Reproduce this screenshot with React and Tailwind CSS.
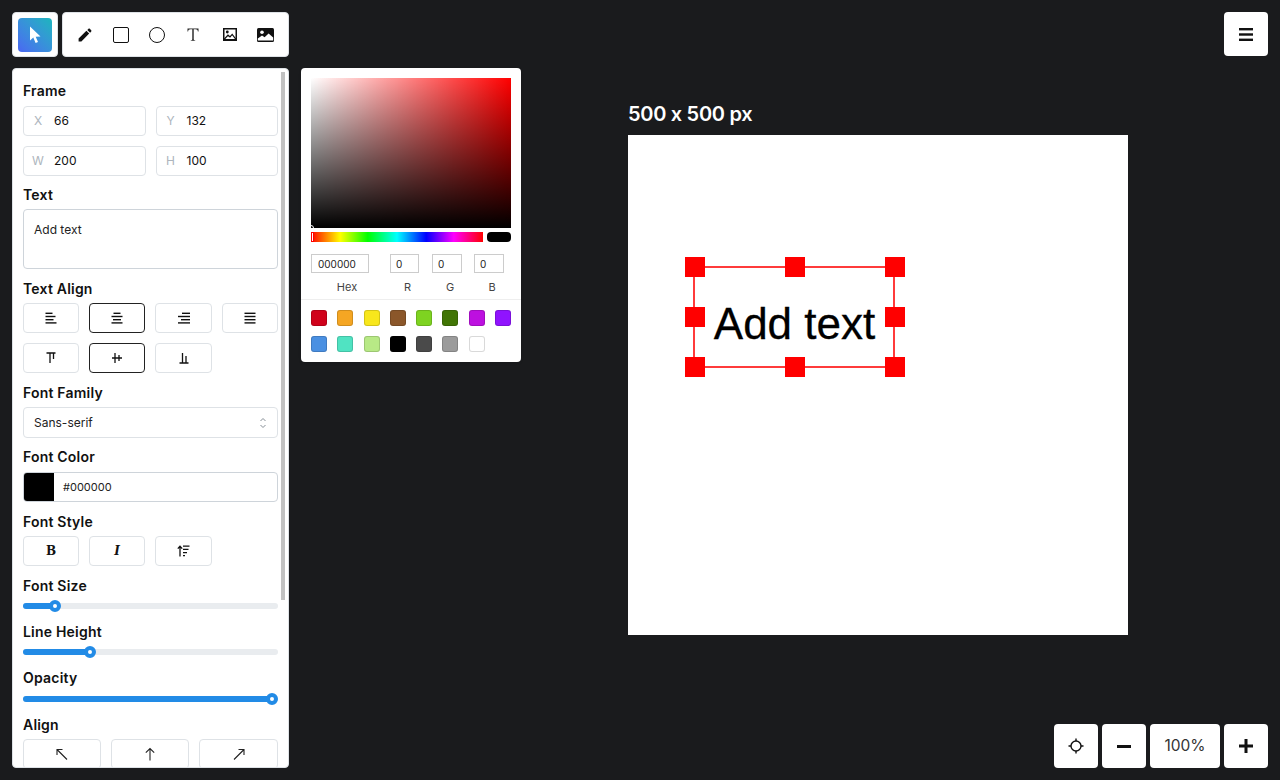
import { useMemo } from 'react';

const swatches = ['#D0021B', '#F5A623', '#F8E71C', '#8B572A', '#7ED321', '#417505', '#BD10E0', '#9013FE', '#4A90E2', '#50E3C2', '#B8E986', '#000000', '#4A4A4A', '#9B9B9B', '#FFFFFF'];

function Bars({ rows }) {
  return (
    <svg width="12" height="12" viewBox="0 0 12 12" fill="#111">
      {rows.map(([x, w], i) => <rect key={i} x={x} y={i * 3.2 + 0.6} width={w} height="1.4" />)}
    </svg>
  );
}

function VAlign({ d }) {
  return (
    <svg width="12" height="12" viewBox="0 0 12 12" stroke="#111" strokeWidth="1.3" fill="none">
      <path d={d} />
    </svg>
  );
}

function Arrow({ d }) {
  return (
    <svg width="14" height="14" viewBox="0 0 14 14" fill="none" stroke="#222" strokeWidth="1.1">
      <path d={d} />
    </svg>
  );
}

function Label({ children, className }) {
  return <div className={`text-sm leading-5 font-semibold tracking-[0.2px] text-[#111] ${className}`}>{children}</div>;
}

function NumField({ tag, value }) {
  return (
    <div className="flex h-[30px] flex-1 items-center rounded border border-[#dee2e6] text-xs text-[#111]">
      <span className="w-[30px] pr-[2px] text-center text-[#adb5bd]">{tag}</span>
      <span>{value}</span>
    </div>
  );
}

function IconBtn({ active, className, children }) {
  return (
    <div className={`flex h-[30px] items-center justify-center rounded border bg-white ${active ? 'border-[#222]' : 'border-[#dee2e6]'} ${className}`}>
      {children}
    </div>
  );
}

function Slider({ pos, className }) {
  return (
    <div className={`relative h-[6px] rounded-full bg-[#e9ecef] ${className}`}>
      <div className="h-full rounded-full bg-[#228be6]" style={{ width: pos }} />
      <div className="absolute top-[-3px] h-3 w-3 rounded-full border-4 border-[#228be6] bg-white" style={{ left: pos - 6 }} />
    </div>
  );
}

function Tools() {
  return (
    <div className="flex gap-1">
      <div className="flex h-[45px] w-[46px] items-center justify-center rounded border border-[#dee2e6] bg-white">
        <div className="flex h-[34px] w-[34px] items-center justify-center rounded bg-gradient-to-tr from-[#4a66f2] to-[#1cb5bd]">
          <svg width="14" height="18" viewBox="0 0 14 18" fill="#fff">
            <path d="M2 0.5V14.5L5.3 11.6L7.6 17L10 16L7.7 10.7L12.5 10.4Z" />
          </svg>
        </div>
      </div>
      <div className="flex h-[45px] w-[227px] items-center rounded border border-[#dee2e6] bg-white px-[4px]">
        <div className="flex w-9 justify-center">
          <svg width="14" height="14" viewBox="0 0 14 14" fill="#111">
            <path d="M0.6 13.4V10.6L8.4 2.8L11.2 5.6L3.4 13.4ZM9.3 1.9L10.5 0.8C10.9 0.4 11.4 0.4 11.8 0.8L13.2 2.2C13.6 2.6 13.6 3.1 13.2 3.5L12.1 4.7Z" />
          </svg>
        </div>
        <div className="flex w-9 justify-center">
          <div className="h-4 w-4 rounded-[2px] border border-[#111]" />
        </div>
        <div className="flex w-9 justify-center">
          <div className="h-4 w-4 rounded-full border border-[#111]" />
        </div>
        <div className="flex w-9 justify-center">
          <svg width="12" height="13" viewBox="0 0 12 13" fill="#222">
            <path d="M0.5 0.5H11.5V3.6H10.9C10.7 2 10.2 1.2 8.4 1.2H6.7V11C6.7 11.9 7 12.2 8.2 12.3V12.8H3.8V12.3C5 12.2 5.3 11.9 5.3 11V1.2H3.6C1.8 1.2 1.3 2 1.1 3.6H0.5Z" />
          </svg>
        </div>
        <div className="flex w-9 justify-center pl-px">
          <svg width="14" height="13" viewBox="0 0 14 13">
            <rect x="0.75" y="0.75" width="12.5" height="11.5" fill="none" stroke="#111" strokeWidth="1.5" />
            <circle cx="4.3" cy="4" r="1.4" fill="#111" />
            <path d="M1 11.5L5 7.2L7 9L9.2 6.4L13 11.5Z" fill="none" stroke="#111" strokeWidth="1.2" />
          </svg>
        </div>
        <div className="flex w-9 justify-center pl-px">
          <svg width="17" height="14" viewBox="0 0 17 14">
            <rect width="17" height="14" rx="1.5" fill="#111" />
            <circle cx="5" cy="4.2" r="1.8" fill="#fff" />
            <path d="M0.8 12.6V10.6L5 7.6L7.6 9.2L11.6 5.6L16.2 9.6V12.6Z" fill="#fff" />
          </svg>
        </div>
      </div>
    </div>
  );
}

function Panel() {
  return (
    <div className="relative mt-[11px] h-[700px] w-[277px] overflow-hidden rounded border border-[#dee2e6] bg-white px-[10px] pt-[12px]">
      <div className="absolute top-[3px] left-[268px] h-[528px] w-[4px] bg-[#c1c1c1]" />
      <Label className="mb-[5px]">Frame</Label>
      <div className="flex flex-col gap-[10px]">
        <div className="flex gap-[10px]"><NumField tag="X" value="66" /><NumField tag="Y" value="132" /></div>
        <div className="flex gap-[10px]"><NumField tag="W" value="200" /><NumField tag="H" value="100" /></div>
      </div>
      <Label className="mt-[9px] mb-[4px]">Text</Label>
      <div className="h-[60px] rounded border border-[#ced4da] px-[10px] py-[12px] text-xs leading-[15px] text-[#222]">Add text</div>
      <Label className="mt-[10px] mb-[4px]">Text Align</Label>
      <div className="grid grid-cols-[56px_56px_57px_56px] gap-[10px]">
        <IconBtn><Bars rows={[[0.5, 7], [0.5, 10], [0.5, 8], [0.5, 11]]} /></IconBtn>
        <IconBtn active><Bars rows={[[2.5, 7], [0.5, 11], [2, 8], [0.5, 11]]} /></IconBtn>
        <IconBtn><Bars rows={[[4, 8], [0, 12], [3, 9], [0, 12]]} /></IconBtn>
        <IconBtn><Bars rows={[[0.5, 11], [0.5, 11], [0.5, 11], [0.5, 11]]} /></IconBtn>
        <IconBtn><VAlign d="M1.5 1H10.5M5 1V11M8.5 1V7" /></IconBtn>
        <IconBtn active><VAlign d="M1 6H11M4 1V11M8 3V9" /></IconBtn>
        <IconBtn><VAlign d="M1.5 11H10.5M4.5 1V11M8 4V11" /></IconBtn>
      </div>
      <Label className="mt-[10px] mb-[4px]">Font Family</Label>
      <div className="flex h-[31px] items-center justify-between rounded border border-[#dee2e6] pr-[10px] pl-[10px] text-xs text-[#222]">
        <span>Sans-serif</span>
        <svg width="8" height="12" viewBox="0 0 8 12" fill="none" stroke="#868e96" strokeWidth="1">
          <path d="M1.5 4L4 1.5L6.5 4M1.5 8L4 10.5L6.5 8" />
        </svg>
      </div>
      <Label className="mt-[9px] mb-[5px]">Font Color</Label>
      <div className="flex h-[30px] items-center overflow-hidden rounded border border-[#ced4da] text-[11px] text-[#222]">
        <div className="h-full w-[30px] bg-black" />
        <span className="ml-[9px]">#000000</span>
      </div>
      <Label className="mt-[10px] mb-[4px]">Font Style</Label>
      <div className="grid grid-cols-[56px_56px_57px_56px] gap-x-[10px]">
        <IconBtn><span className="font-['DejaVu_Serif'] text-xs font-bold text-[#111]">B</span></IconBtn>
        <IconBtn><span className="font-['DejaVu_Serif'] text-xs font-bold text-[#111] italic">I</span></IconBtn>
        <IconBtn>
          <svg width="13" height="12" viewBox="0 0 13 12" fill="none" stroke="#111" strokeWidth="1.3">
            <path d="M3 11.5V1.5M0.8 3.6L3 1.2L5.2 3.6M6 1.2H12.5M6 4.4H11.5M6 7.6H10M6 10.6H8" />
          </svg>
        </IconBtn>
      </div>
      <Label className="mt-[10px] mb-[7px]">Font Size</Label>
      <Slider pos={32} />
      <Label className="mt-[13px] mb-[7px]">Line Height</Label>
      <Slider pos={67} />
      <Label className="mt-[13px] mb-[8px]">Opacity</Label>
      <Slider pos={249} />
      <Label className="mt-[13px] mb-[4px]">Align</Label>
      <div className="grid grid-cols-[78px_78px_79px] gap-x-[10px]">
        <IconBtn><Arrow d="M12 12.5L2 2.5M2 8V2.5H7.5" /></IconBtn>
        <IconBtn><Arrow d="M7 13.5V1.5M2.8 5.7L7 1.5L11.2 5.7" /></IconBtn>
        <IconBtn><Arrow d="M2 12.5L12 2.5M6.5 2.5H12V8" /></IconBtn>
      </div>
    </div>
  );
}

function ColorPicker() {
  return (
    <div className="mt-[56px] h-[294px] w-[220px] rounded bg-white shadow">
      <div className="px-[10px] pt-[10px]">
        <div className="relative h-[150px] w-[200px] bg-[#ff0000]">
          <div className="absolute inset-0 bg-gradient-to-r from-white to-transparent" />
          <div className="absolute inset-0 bg-gradient-to-t from-black to-transparent" />
          <div className="absolute bottom-[-3px] left-[-3px] h-[6px] w-[6px] rounded-full border border-white" />
        </div>
        <div className="mt-[4px] flex h-[10px] gap-[4px]">
          <div className="relative w-[172px] bg-[linear-gradient(to_right,#f00_0%,#ff0_17%,#0f0_33%,#0ff_50%,#00f_67%,#f0f_83%,#f00_100%)]">
            <div className="absolute top-0 left-0 h-full w-[3px] border border-[#f00] bg-white" />
          </div>
          <div className="w-[24px] rounded-sm bg-black" />
        </div>
        <div className="mt-[12px] flex text-[10px] leading-none text-[#222]">
          <div className="flex h-[19px] w-[58px] items-center border border-[#ccc] pl-[6px]">000000</div>
          <div className="ml-[21px] flex h-[19px] w-[29px] items-center border border-[#ccc] pl-[5px]">0</div>
          <div className="ml-[13px] flex h-[19px] w-[30px] items-center border border-[#ccc] pl-[5px]">0</div>
          <div className="ml-[12px] flex h-[19px] w-[30px] items-center border border-[#ccc] pl-[5px]">0</div>
        </div>
        <div className="mt-[8px] flex text-[11px] leading-[13px] text-[#444]">
          <div className="w-[72px] text-center">Hex</div>
          <div className="ml-[10px] w-[29px] text-center">R</div>
          <div className="ml-[13px] w-[30px] text-center">G</div>
          <div className="ml-[12px] w-[30px] text-center">B</div>
        </div>
      </div>
      <div className="mt-[5px] grid grid-cols-8 gap-x-[10px] gap-y-[10px] border-t border-[#eeeeee] px-[10px] pt-[10px]">
        {swatches.map((c) => (
          <div key={c} className="h-4 w-4 rounded-[3px] shadow-[inset_0_0_0_1px_rgba(0,0,0,0.15)]" style={{ backgroundColor: c }} />
        ))}
      </div>
    </div>
  );
}

function Handle({ className }) {
  return <div className={`absolute h-5 w-5 bg-[#ff0000] ${className}`} />;
}

function Canvas() {
  return (
    <div className="ml-[107px] pt-[90px]">
      <div className="h-[33px] text-xl leading-[24px] font-semibold tracking-[-0.3px] text-white [font-feature-settings:'calt'_0]">500 x 500 px</div>
      <div className="relative h-[500px] w-[500px] bg-white">
        <div className="absolute top-[131px] left-[65px] flex h-[102px] w-[202px] items-center justify-center border-2 border-[#ff3b3b] pt-[14px] pl-px font-['Liberation_Sans'] text-[44px] text-black [-webkit-text-stroke:0.3px_black]">
          Add text
          <Handle className="top-[-11px] left-[-10px]" />
          <Handle className="top-[-11px] left-[90px]" />
          <Handle className="top-[-11px] left-[190px]" />
          <Handle className="top-[39px] left-[-10px]" />
          <Handle className="top-[39px] left-[190px]" />
          <Handle className="top-[89px] left-[-10px]" />
          <Handle className="top-[89px] left-[90px]" />
          <Handle className="top-[89px] left-[190px]" />
        </div>
      </div>
    </div>
  );
}

export default function App() {
  const plus = useMemo(() => 'M8 1V15M1 8H15', []);
  return (
    <div className="relative flex h-[780px] w-[1280px] overflow-hidden bg-[#1a1b1d] pt-3 pl-3 font-['Inter',sans-serif]">
      <div className="flex w-[277px] flex-col">
        <Tools />
        <Panel />
      </div>
      <div className="ml-3">
        <ColorPicker />
      </div>
      <Canvas />

      <div className="absolute top-3 right-3 flex h-11 w-11 items-center justify-center rounded bg-white">
        <svg width="14" height="13" viewBox="0 0 14 13" fill="#111">
          <rect width="14" height="2.4" />
          <rect y="5.3" width="14" height="2.4" />
          <rect y="10.6" width="14" height="2.4" />
        </svg>
      </div>

      <div className="absolute right-3 bottom-3 flex gap-1">
        <div className="flex h-11 w-11 items-center justify-center rounded bg-white">
          <svg width="16" height="16" viewBox="0 0 16 16" fill="none" stroke="#111" strokeWidth="1.4">
            <circle cx="8" cy="8" r="5" />
            <path d="M8 0.5V3M8 13V15.5M0.5 8H3M13 8H15.5" />
          </svg>
        </div>
        <div className="flex h-11 w-11 items-center justify-center rounded bg-white">
          <svg width="14" height="3" viewBox="0 0 14 3" fill="#111"><rect width="14" height="3" /></svg>
        </div>
        <div className="flex h-11 w-[70px] items-center justify-center rounded bg-white text-[15.5px] text-[#333]">100%</div>
        <div className="flex h-11 w-11 items-center justify-center rounded bg-white">
          <svg width="16" height="16" viewBox="0 0 16 16" fill="none" stroke="#111" strokeWidth="3"><path d={plus} /></svg>
        </div>
      </div>
    </div>
  );
}
